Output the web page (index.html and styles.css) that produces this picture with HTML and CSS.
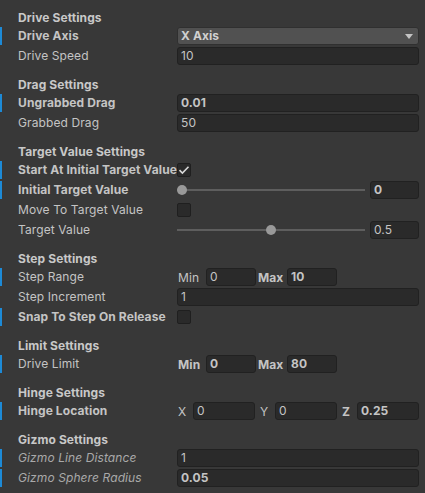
FILE: index.html
```html
<!DOCTYPE html>
<html>
<head>
<meta charset="utf-8">
<link rel="stylesheet" href="styles.css">
</head>
<body>
<div class="inspector">
  <div class="header first">Drive Settings</div>
  <div class="row mod"><div class="label b">Drive Axis</div><div class="ctrl"><div class="dropdown b"><span>X Axis</span><svg class="arrow" width="8" height="5" viewBox="0 0 8 5"><path d="M0 0H8L4 5Z" fill="#c4c4c4"/></svg></div></div></div>
  <div class="row"><div class="label">Drive Speed</div><div class="ctrl"><div class="field">10</div></div></div>

  <div class="header">Drag Settings</div>
  <div class="row mod"><div class="label b">Ungrabbed Drag</div><div class="ctrl"><div class="field b">0.01</div></div></div>
  <div class="row"><div class="label">Grabbed Drag</div><div class="ctrl"><div class="field">50</div></div></div>

  <div class="header">Target Value Settings</div>
  <div class="row mod"><div class="label b">Start At Initial Target Value</div><div class="ctrl"><div class="check"><svg width="12" height="10" viewBox="0 0 12 10"><path d="M1.5 5.2L4.4 8L10.5 1.8" fill="none" stroke="#d8d8d8" stroke-width="1.6"/></svg></div></div></div>
  <div class="row mod"><div class="label b">Initial Target Value</div><div class="ctrl"><div class="slider"><div class="track"><div class="thumb" style="left:0%"></div></div></div><div class="field num b">0</div></div></div>
  <div class="row"><div class="label">Move To Target Value</div><div class="ctrl"><div class="check"></div></div></div>
  <div class="row"><div class="label">Target Value</div><div class="ctrl"><div class="slider"><div class="track"><div class="thumb" style="left:50%"></div></div></div><div class="field num">0.5</div></div></div>

  <div class="header">Step Settings</div>
  <div class="row mod"><div class="label">Step Range</div><div class="ctrl"><span class="minlbl">Min</span><div class="field mm">0</div><span class="maxlbl b">Max</span><div class="field mm b">10</div></div></div>
  <div class="row"><div class="label">Step Increment</div><div class="ctrl"><div class="field">1</div></div></div>
  <div class="row mod"><div class="label b">Snap To Step On Release</div><div class="ctrl"><div class="check"></div></div></div>

  <div class="header">Limit Settings</div>
  <div class="row mod"><div class="label">Drive Limit</div><div class="ctrl"><span class="minlbl b">Min</span><div class="field mm b">0</div><span class="maxlbl b">Max</span><div class="field mm b">80</div></div></div>

  <div class="header">Hinge Settings</div>
  <div class="row mod"><div class="label b">Hinge Location</div><div class="ctrl vec">
    <div class="comp"><span class="axis">X</span><div class="field">0</div></div>
    <div class="comp"><span class="axis">Y</span><div class="field">0</div></div>
    <div class="comp"><span class="axis b">Z</span><div class="field b">0.25</div></div>
  </div></div>

  <div class="header">Gizmo Settings</div>
  <div class="row mod"><div class="label i">Gizmo Line Distance</div><div class="ctrl"><div class="field">1</div></div></div>
  <div class="row mod"><div class="label i">Gizmo Sphere Radius</div><div class="ctrl"><div class="field b">0.05</div></div></div>
</div>
</body>
</html>
```

FILE: styles.css
```css
html, body {
  margin: 0;
  padding: 0;
  background: #383838;
}
body {
  font-family: Inter, "Noto Sans", "Liberation Sans", sans-serif;
  font-size: 12px;
  letter-spacing: 0.1px;
  color: #c4c4c4;
}
.inspector {
  padding-top: 1px;
}
.header {
  height: 18px;
  line-height: 18px;
  margin-top: 11px;
  padding-left: 18px;
  font-weight: 700;
  color: #c8c8c8;
}
.header.first {
  margin-top: 8px;
}
.row {
  display: flex;
  align-items: center;
  height: 18px;
  margin-bottom: 2px;
  padding-left: 16px;
  border-left: 2px solid transparent;
}
.row.mod {
  border-left-color: #1d8ad6;
}
.label {
  width: 159px;
  flex: none;
  white-space: nowrap;
  overflow: hidden;
  line-height: 18px;
}
.b { font-weight: 700; }
.i { font-style: italic; color: #a9a9a9; }
.ctrl {
  flex: 1;
  display: flex;
  align-items: center;
  height: 18px;
  margin-right: 6px;
  min-width: 0;
}
.field {
  box-sizing: border-box;
  flex: 1;
  height: 18px;
  line-height: 16px;
  padding-left: 3px;
  background: #2a2a2a;
  border: 1px solid #212121;
  border-radius: 3px;
  color: #c4c4c4;
  white-space: nowrap;
  overflow: hidden;
}
.dropdown {
  box-sizing: border-box;
  flex: 1;
  height: 18px;
  line-height: 16px;
  padding-left: 3px;
  padding-right: 5px;
  background: #515151;
  border: 1px solid #303030;
  border-radius: 3px;
  display: flex;
  align-items: center;
  justify-content: space-between;
  color: #d0d0d0;
}
.arrow { display: block; }
.check {
  box-sizing: border-box;
  width: 14px;
  height: 14px;
  background: #2a2a2a;
  border: 1px solid #1f1f1f;
  border-radius: 2px;
  display: flex;
  align-items: center;
  justify-content: center;
}
.check svg { display: block; }
.slider {
  flex: 1;
  height: 18px;
  display: flex;
  align-items: center;
  padding: 0 5px;
  margin-right: 5px;
}
.track {
  position: relative;
  flex: 1;
  height: 2px;
  background: #5e5e5e;
  box-shadow: -5px 0 0 #5e5e5e, 5px 0 0 #5e5e5e;
}
.thumb {
  position: absolute;
  top: -4px;
  width: 10px;
  height: 10px;
  margin-left: -5px;
  border-radius: 50%;
  background: #999999;
}
.field.num {
  flex: none;
  width: 49px;
}
.minlbl {
  width: 29px;
  flex: none;
  padding-left: 1px;
  box-sizing: border-box;
}
.maxlbl {
  width: 31px;
  flex: none;
  padding-left: 2px;
  box-sizing: border-box;
}
.field.mm {
  flex: none;
  width: 50px;
}
.vec {
  gap: 4px;
}
.comp {
  flex: 1;
  display: flex;
  align-items: center;
  min-width: 0;
}
.axis {
  width: 16px;
  flex: none;
  padding-left: 1px;
  box-sizing: border-box;
}
```
